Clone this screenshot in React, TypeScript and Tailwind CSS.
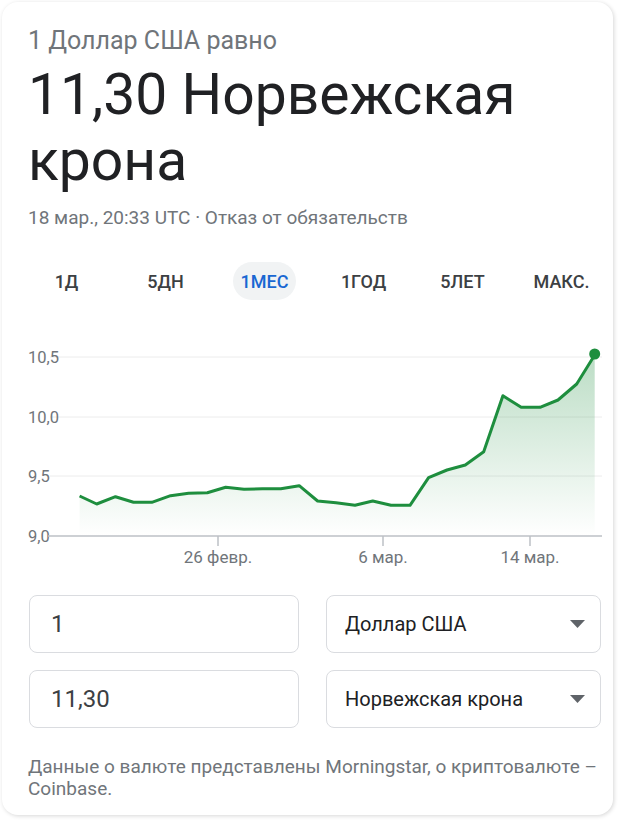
import React from "react";

const points: [number, number][] = [
  [79.6, 496], [96.7, 504], [115.5, 496.7], [133.5, 502.3], [151.8, 502.3],
  [170.6, 495.7], [188.6, 493.3], [207.3, 492.7], [225.7, 487.3], [244, 489.3],
  [262.4, 488.7], [280.8, 488.7], [299.2, 485.7], [317.6, 501], [336, 502.7],
  [355, 505.3], [372.7, 501], [391, 505.3], [410, 505.3], [428.6, 477.7],
  [447, 470], [465.3, 465], [483.7, 451.7], [502.9, 395.7], [521.2, 407.3],
  [540, 407.3], [558, 400], [576.7, 384], [594.7, 355],
];

const tabs = ["1Д", "5ДН", "1МЕС", "1ГОД", "5ЛЕТ", "МАКС."];

const Chart = () => {
  const line = points.map(([x, y], i) => `${i ? "L" : "M"}${x} ${y}`).join(" ");
  const area = `${line} L594.7 536 L79.6 536 Z`;
  const grid = [
    { y: 357, label: "10,5" },
    { y: 417, label: "10,0" },
    { y: 476, label: "9,5" },
  ];
  const ticks = [
    { x: 218, label: "26 февр." },
    { x: 383, label: "6 мар." },
    { x: 530, label: "14 мар." },
  ];
  return (
    <svg width="611" height="240" viewBox="2 330 611 240" className="block mt-[30px]">
      <defs>
        <linearGradient id="fill" x1="0" y1="0" x2="0" y2="1">
          <stop offset="0%" stopColor="#1e8e3e" stopOpacity="0.3" />
          <stop offset="100%" stopColor="#1e8e3e" stopOpacity="0" />
        </linearGradient>
      </defs>
      {grid.map((g) => (
        <g key={g.label}>
          <line x1="50" x2="602" y1={g.y} y2={g.y} stroke="#ececec" strokeWidth="1" />
          <text x="28" y={g.y + 6} fontSize="16.5" fill="#70757a" fontFamily="Roboto, sans-serif">
            {g.label}
          </text>
        </g>
      ))}
      <text x="28" y="542" fontSize="16.5" fill="#70757a" fontFamily="Roboto, sans-serif">
        9,0
      </text>
      <path d={area} fill="url(#fill)" />
      <line x1="48" x2="602" y1="536" y2="536" stroke="#bdc1c6" strokeWidth="1.5" />
      {ticks.map((t) => (
        <g key={t.label}>
          <line x1={t.x} x2={t.x} y1="536" y2="546" stroke="#bdc1c6" strokeWidth="1.5" />
          <text
            x={t.x}
            y="563"
            fontSize="17"
            fill="#70757a"
            textAnchor="middle"
            fontFamily="Roboto, sans-serif"
          >
            {t.label}
          </text>
        </g>
      ))}
      <path d={line} fill="none" stroke="#1e8e3e" strokeWidth="3" strokeLinejoin="round" />
      <circle cx="594.7" cy="354" r="5.5" fill="#1e8e3e" />
    </svg>
  );
};

const Caret = () => (
  <svg width="15" height="8" viewBox="0 0 15 8" className="shrink-0">
    <path d="M0 0 L15 0 L7.5 8 Z" fill="#5f6368" />
  </svg>
);

export default function App() {
  return (
    <div className="w-[640px] h-[823px] bg-white overflow-hidden" style={{ fontFamily: "Roboto, sans-serif" }}>
      <div className="ml-[2px] mt-[2px] w-[611px] h-[813px] rounded-[16px] bg-white shadow-[1px_1px_4px_rgba(0,0,0,0.16)] pt-[25px]">
        <div className="pl-[26px] text-[25px] leading-[28px] text-[#70757a]">1 Доллар США равно</div>
        <div className="pl-[26px] mt-[7px] text-[57px] leading-[66px] text-[#202124]">
          11,30 Норвежская
          <br />
          крона
        </div>
        <div className="pl-[26px] mt-[12px] text-[19px] leading-[24px] text-[#70757a]">
          18 мар., 20:33 UTC · Отказ от обязательств
        </div>
        <div className="mt-[32px] ml-[15px] w-[594px] grid grid-cols-6 h-[38px]">
          {tabs.map((t) => (
            <div key={t} className="flex items-center justify-center">
              <span
                className={
                  t === "1МЕС"
                    ? "h-[38px] px-[8px] rounded-full bg-[#f1f3f4] flex items-center text-[18px] font-medium text-[#1967d2]"
                    : "h-[38px] px-[8px] flex items-center text-[18px] font-medium text-[#3c4043]"
                }
              >
                {t}
              </span>
            </div>
          ))}
        </div>
        <Chart />
        <div className="mt-[25px] ml-[27px] flex flex-col gap-[17px]">
          {[
            { v: "1", c: "Доллар США" },
            { v: "11,30", c: "Норвежская крона" },
          ].map((r) => (
            <div key={r.v} className="flex gap-[27px]">
              <div className="w-[270px] h-[58px] rounded-[8px] border border-[#dadce0] flex items-center pl-[21px] text-[24px] text-[#3c4043]">
                {r.v}
              </div>
              <div className="w-[275px] h-[58px] rounded-[8px] border border-[#dadce0] flex items-center justify-between pl-[18px] pr-[15px] text-[20px] text-[#202124]">
                <span>{r.c}</span>
                <Caret />
              </div>
            </div>
          ))}
        </div>
        <div className="mt-[28px] pl-[26px] pr-[8px] text-[19px] leading-[22px] text-[#70757a]">
          Данные о валюте представлены Morningstar, о криптовалюте – Coinbase.
        </div>
      </div>
    </div>
  );
}
